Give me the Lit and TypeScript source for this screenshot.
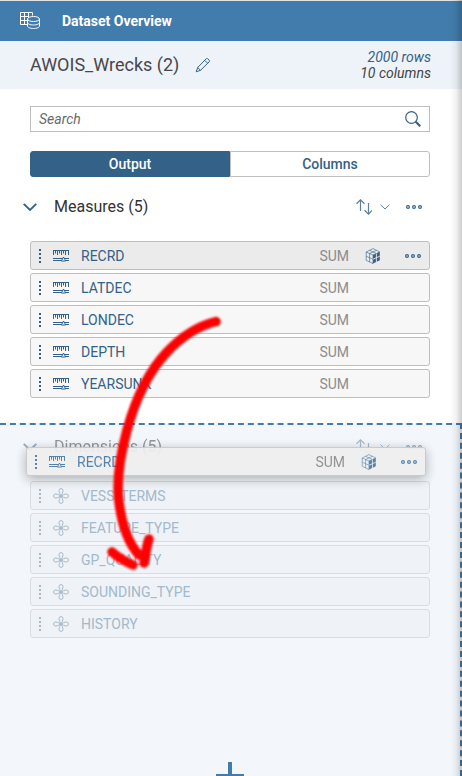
import { LitElement, html, css, svg, nothing } from "lit";
import { customElement, property, state } from "lit/decorators.js";

const icons = {
  dataset: html`<svg width="20" height="18" viewBox="0 0 20 18" fill="none" stroke="currentColor" aria-hidden="true">
    <path d="M7 12.5H.5V.5h12v3M.5 4.5h8M.5 8.5H7M4.5.5v12M8.5.5V5" />
    <ellipse cx="13.500" cy="7" rx="6" ry="2.500" />
    <path d="M7.5 7v7c0 1.400 2.700 2.500 6 2.500s6-1.100 6-2.500V7M7.500 10.500c0 1.400 2.700 2.500 6 2.500s6-1.100 6-2.500" />
  </svg>`,
  pencil: html`<svg width="16" height="16" viewBox="0 0 16 16" fill="none" stroke="currentColor" aria-hidden="true">
    <path d="M1.200 14.800l1.500-4.300 8.500-8.700c.5-.5 1.100-.5 1.600 0l1.400 1.400c.5.5.5 1.100 0 1.600l-8.700 8.500zM2.700 10.500l2.800 2.800M9.800 3.400l2.800 2.800" />
  </svg>`,
  search: html`<svg width="16" height="16" viewBox="0 0 16 16" fill="none" stroke="currentColor" aria-hidden="true">
    <circle cx="6.500" cy="6.500" r="5.800" stroke-width="1.200" /><path d="M10.800 10.800l4.400 4.400" stroke-width="2.200" />
  </svg>`,
  chevron: html`<svg width="14" height="8" viewBox="0 0 14 8" fill="none" stroke="currentColor" stroke-width="1.800" aria-hidden="true">
    <path d="M.7.8L7 7 13.300.8" />
  </svg>`,
  sort: html`<svg width="16" height="16" viewBox="0 0 16 16" fill="none" stroke="currentColor" stroke-width="1.200" aria-hidden="true">
    <path d="M4.500.8V12M.5 4.700L4.500.8l4 3.900M12.500 4v11.200M8.500 11.300l4 3.900 3.500-3.900" />
  </svg>`,
  small: html`<svg width="10" height="6" viewBox="0 0 10 6" fill="none" stroke="currentColor" aria-hidden="true">
    <path d="M.5.7L5 5 9.500.7" />
  </svg>`,
  more: html`<svg width="16" height="6" viewBox="0 0 16 6" fill="none" stroke="currentColor" stroke-width="1.200" aria-hidden="true">
    <circle cx="2" cy="3" r="1.400" /><circle cx="8" cy="3" r="1.400" /><circle cx="14" cy="3" r="1.400" />
  </svg>`,
  grip: html`<svg width="2" height="14" viewBox="0 0 2 14" fill="currentColor" aria-hidden="true">
    <path d="M0 0h2v2H0zM0 4h2v2H0zM0 8h2v2H0zM0 12h2v2H0z" />
  </svg>`,
  measure: html`<svg width="16" height="14" viewBox="0 0 16 14" fill="none" stroke="currentColor" aria-hidden="true">
    <path d="M0 1.500h16M.5 1v5M2.500 1v3.500M4.500 1v5M6.500 1v3.500M8.500 1v5M10.500 1v3.500M12.500 1v5M15.500 1v5M0 9.500h16M0 11.500h16" />
    <path d="M10.500 8l2.200 4h-4.400z" fill="#f7f7f7" />
  </svg>`,
  dimension: html`<svg width="16" height="16" viewBox="0 0 16 16" fill="none" stroke="currentColor" aria-hidden="true">
    <path d="M8 8C7 6 6 4.500 6 2.600a2 2 0 0 1 4 0C10 4.500 9 6 8 8c2-1 3.500-2 5.400-2a2 2 0 0 1 0 4C11.500 10 10 9 8 8c1 2 2 3.500 2 5.400a2 2 0 0 1-4 0C6 11.500 7 10 8 8c-2 1-3.500 2-5.400 2a2 2 0 0 1 0-4C4.500 6 6 7 8 8z" />
    <circle cx="8" cy="8" r="1.600" fill="currentColor" stroke="none" />
  </svg>`,
  cube: html`<svg width="16" height="16" viewBox="0 0 16 16" fill="none" stroke="currentColor" aria-hidden="true">
    <path d="M8 7l6.800-3v8.300L8 15.600z" fill="currentColor" stroke="none" />
    <path d="M8 .6L14.800 4 8 7 1.200 4zM1.200 4v8.300L8 15.600M8 7v8.600M1.200 8.200L8 11.200M4.600 5.500V14M4.600 2.300l6.800 3.200M11.400 2.300L4.600 5.500" stroke-width=".8" opacity=".75" />
    <path d="M11.400 5.500v8.500M8 11.200l6.800-3" stroke="#ebebeb" stroke-width=".9" />
  </svg>`,
};

@customElement("field-row")
class FieldRow extends LitElement {
  @property() name = "";
  @property() kind: "measure" | "dimension" = "measure";
  @property({ type: Boolean, reflect: true }) active = false;
  @property({ type: Boolean, reflect: true }) lifted = false;
  @property({ type: Boolean, reflect: true }) muted = false;

  static styles = css`
    :host {
      display: flex;
      align-items: center;
      gap: 12px;
      box-sizing: border-box;
      height: 29px;
      padding: 0 8px;
      border: 1px solid #bfbfbf;
      border-radius: 3px;
      background: #f7f7f7;
      color: #346187;
    }
    :host([active]) { background: #ebebeb; }
    :host([muted]) { background: #eff3f7; border-color: #d8dde1; color: #a3b9cc; }
    :host([lifted]) {
      background: #efefef;
      border-color: #c8c8c8;
      color: #4a7ba3;
      box-shadow: 0 3px 12px rgba(0, 0, 0, 0.32);
      opacity: 0.93;
    }
    svg { display: block; flex: none; }
    .name { flex: 1; font-size: 14px; line-height: 16px; }
    .aggregate { color: #8c8c8c; font-size: 14px; line-height: 16px; }
    .tools { display: flex; align-items: center; justify-content: space-between; width: 56px; margin-left: 4px; }
    button { padding: 0; border: 0; background: none; color: inherit; }
  `;

  render() {
    return html`
      ${icons.grip}${icons[this.kind]}
      <span class="name">${this.name}</span>
      ${this.kind === "measure"
        ? html`<span class="aggregate">SUM</span>
            <span class="tools">${this.active || this.lifted
              ? html`${icons.cube}<button aria-label="More options">${icons.more}</button>`
              : nothing}</span>`
        : nothing}
    `;
  }
}

@customElement("app-root")
class AppRoot extends LitElement {
  @state() private tab = "Output";

  static styles = css`
    :host {
      position: relative;
      display: flex;
      flex-direction: column;
      height: 100vh;
      overflow: hidden;
      background: #fff;
      color: #333;
      font-family: Roboto, "Liberation Sans", sans-serif;
      font-size: 14px;
      line-height: 16px;
    }
    svg { display: block; flex: none; }
    button { padding: 0; border: 0; background: none; color: #346187; font: inherit; }
    h1, h2, h3, ul { margin: 0; padding: 0; }
    .bar {
      display: flex;
      align-items: center;
      gap: 22px;
      height: 40px;
      padding: 0 20px;
      border-top: 1px solid #dfe3e6;
      background: #427cac;
      color: #fff;
    }
    .bar h1 { font-size: 14px; font-weight: 700; }
    .title {
      display: flex;
      align-items: center;
      gap: 16px;
      height: 48px;
      padding: 0 31px 0 30px;
      background: #edf3f8;
    }
    .title h2 { color: #4a464c; font-size: 18px; font-weight: 400; line-height: 24px; }
    .size { margin-left: auto; text-align: right; font-style: italic; color: #444; }
    .size a { display: block; color: #346187; text-decoration: none; }
    .controls { display: flex; flex-direction: column; gap: 19px; padding: 17px 32px 0 30px; }
    .search {
      display: flex;
      align-items: center;
      box-sizing: border-box;
      height: 26px;
      padding: 0 8px;
      border: 1px solid #bfbfbf;
      color: #346187;
    }
    .search input { flex: 1; min-width: 0; padding: 0; border: 0; outline: 0; background: none; font: inherit; }
    .search input::placeholder { color: #6a6a6a; font-style: italic; opacity: 1; }
    .tabs { display: flex; height: 26px; }
    .tabs button { flex: 1; border: 1px solid #bfbfbf; border-radius: 0 3px 3px 0; font-weight: 500; }
    .tabs button:first-child { border-radius: 3px 0 0 3px; }
    .tabs button[aria-pressed="true"] { border-color: #346187; background: #346187; color: #fff; }
    section { position: relative; padding: 12px 0 25px; }
    .head { display: flex; align-items: center; height: 36px; padding: 0 40px 0 23px; color: #346187; }
    .head h3 { flex: 1; margin-left: 17px; color: #333; font-size: 16px; font-weight: 400; line-height: 20px; }
    .sort { display: flex; align-items: center; gap: 8px; margin-right: 16px; opacity: 0.8; }
    .fields { display: flex; flex-direction: column; gap: 3px; padding: 16px 32px 0 30px; list-style: none; }
    .drop {
      display: flex;
      flex: 1;
      flex-direction: column;
      padding: 4px 0 0;
      border-top: 2px dashed #427cac;
      border-right: 2px dashed #427cac;
      background: #f3f7fb;
    }
    .drop .head { padding-right: 38px; opacity: 0.5; }
    .drop .fields { padding-right: 30px; }
    .dragged { position: absolute; top: 22px; left: 26px; right: 34px; }
    .add { width: 28px; height: 14px; margin: auto auto 0; overflow: hidden; color: #427cac; }
    .edge {
      position: absolute;
      inset: 0 0 0 auto;
      width: 12px;
      background: linear-gradient(to right, rgba(0, 0, 0, 0), rgba(0, 0, 0, 0.05) 50%, rgba(0, 0, 0, 0.2));
      pointer-events: none;
    }
    .arrow { position: absolute; top: 300px; left: 90px; filter: blur(1px); pointer-events: none; }
  `;

  private head(title: string) {
    return html`<div class="head">
      ${icons.chevron}
      <h3>${title}</h3>
      <button class="sort" aria-label="Sort">${icons.sort}${icons.small}</button>
      <button aria-label="More options">${icons.more}</button>
    </div>`;
  }

  render() {
    return html`
      <header class="bar">${icons.dataset}<h1>Dataset Overview</h1></header>
      <div class="title">
        <h2>AWOIS_Wrecks (2)</h2>
        <button aria-label="Rename">${icons.pencil}</button>
        <div class="size"><a href="#rows">2000 rows</a>10 columns</div>
      </div>
      <div class="controls">
        <label class="search"><input type="text" placeholder="Search" aria-label="Search" />${icons.search}</label>
        <div class="tabs">
          ${["Output", "Columns"].map(
            (t) => html`<button aria-pressed=${this.tab === t} @click=${() => (this.tab = t)}>${t}</button>`
          )}
        </div>
      </div>
      <section>
        ${this.head("Measures (5)")}
        <ul class="fields">
          ${["RECRD", "LATDEC", "LONDEC", "DEPTH", "YEARSUNK"].map(
            (n, i) => html`<li><field-row name=${n} ?active=${i === 0}></field-row></li>`
          )}
        </ul>
      </section>
      <section class="drop">
        ${this.head("Dimensions (5)")}
        <ul class="fields">
          ${["VESSLTERMS", "FEATURE_TYPE", "GP_QUALITY", "SOUNDING_TYPE", "HISTORY"].map(
            (n) => html`<li><field-row name=${n} kind="dimension" muted></field-row></li>`
          )}
        </ul>
        <div class="add">
          <svg width="28" height="28" viewBox="0 0 28 28" fill="currentColor" aria-hidden="true">
            <path d="M12 0h4v12h12v4H16v12h-4V16H0v-4h12z" />
          </svg>
        </div>
        <field-row class="dragged" name="RECRD" lifted></field-row>
      </section>
      <div class="edge"></div>
      <svg class="arrow" width="140" height="280" viewBox="0 0 140 280" fill="none" stroke="#ff0000" stroke-width="9.500" stroke-linecap="round" aria-hidden="true">
        ${svg`<path d="M126 21.500C108 26 91 37 77 52C59 71 46 97 37 130C30 156 26 180 29 202C32 226 38 243 49 255" /><path d="M22 252C29 258 36 262 43 265M59 239C56 247 56 255 54 263" />`}
      </svg>
    `;
  }
}
